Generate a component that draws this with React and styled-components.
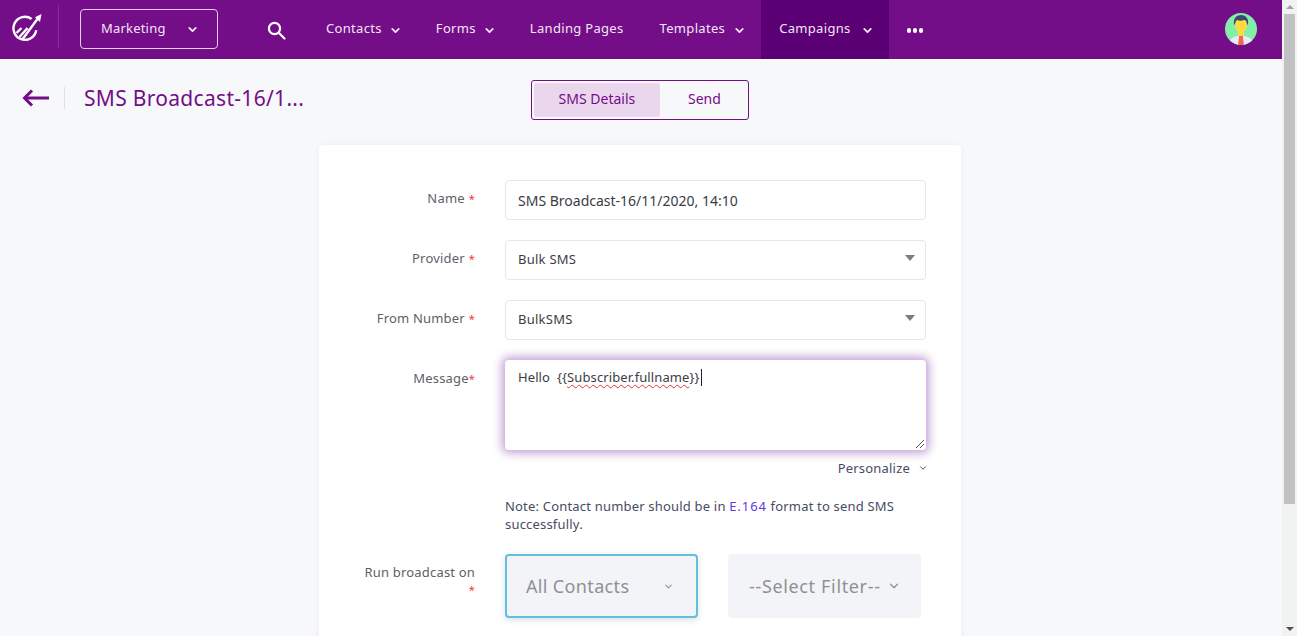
import React from "react";
import styled, { createGlobalStyle } from "styled-components";
import { ChevronDown } from "lucide-react";

const Global = createGlobalStyle`
  html, body { margin: 0; padding: 0; height: 636px; overflow: hidden; }
  body { font-family: "Noto Sans", "Open Sans", sans-serif; background: #f7f8fa; }
  * { box-sizing: border-box; }
`;

const Shell = styled.div`
  display: flex;
  width: 1297px;
  height: 636px;
  overflow: hidden;
`;
const Page = styled.div`
  flex: 1;
  min-width: 0;
  display: flex;
  flex-direction: column;
  background: #f7f8fa;
`;
const Scrollbar = styled.div`
  width: 15px;
  flex: none;
  background: #f1f2f2;
  display: flex;
  flex-direction: column;
  align-items: center;
`;
const ScrollArrow = styled.div`
  height: 14px;
  flex: none;
  display: flex;
  align-items: center;
  justify-content: center;
  &::before {
    content: "";
    border-left: 4px solid transparent;
    border-right: 4px solid transparent;
    ${(p) =>
      p.$down
        ? "border-top: 4px solid #505050;"
        : "border-bottom: 4px solid #a3a3a3;"}
  }
`;
const ScrollThumb = styled.div`
  width: 11px;
  height: 490px;
  flex: none;
  background: #c1c1c1;
`;
const ScrollRest = styled.div`
  flex: 1;
`;

const TopBar = styled.header`
  height: 59px;
  flex: none;
  background: #740d88;
  display: flex;
  align-items: stretch;
  color: #f3e6f5;
  font-size: 13px;
`;
const Logo = styled.div`
  width: 59px;
  flex: none;
  display: flex;
  align-items: center;
  padding: 3px 0 0 11px;
  border-right: 1px solid rgba(255, 255, 255, 0.14);
  margin: 5px 0 11px;
`;
const WorkspaceBox = styled.div`
  margin: 9px 0 10px 21px;
  width: 138px;
  height: 40px;
  border: 1px solid #e6cfea;
  border-radius: 4px;
  display: flex;
  align-items: center;
  padding: 0 18px 3px 20px;
  justify-content: space-between;
  letter-spacing: 0.2px;
`;
const SearchSlot = styled.div`
  width: 108px;
  flex: none;
  display: flex;
  align-items: center;
  padding: 2px 0 0 49px;
`;
const NavItem = styled.div`
  display: flex;
  align-items: center;
  gap: ${(p) => p.$gap ?? 7.5}px;
  padding: 0 ${(p) => p.$pr ?? 15.5}px 3px ${(p) => p.$pl ?? 18}px;
  background: ${(p) => (p.$active ? "#5a0074" : "transparent")};
  letter-spacing: 0.32px;
  white-space: nowrap;
`;
const NavChevron = styled.span`
  display: flex;
  margin-top: 4px;
`;
const Dots = styled.div`
  display: flex;
  gap: 1.5px;
  padding: 2px 0 0 18px;
  align-items: center;
  span {
    width: 4.5px;
    height: 4.5px;
    border-radius: 50%;
    background: #fff;
  }
`;
const Spacer = styled.div`
  flex: 1;
`;
const AvatarSlot = styled.div`
  display: flex;
  align-items: center;
  padding: 0 25px 2px 0;
`;

const SubBar = styled.div`
  height: 86px;
  flex: none;
  display: flex;
  align-items: flex-start;
`;
const Back = styled.div`
  width: 65px;
  flex: none;
  margin-top: 28px;
  height: 22px;
  padding-left: 22px;
  border-right: 1px solid #e0e0e4;
  display: flex;
  align-items: center;
  color: #740d88;
`;
const PageTitle = styled.h1`
  margin: 25px 0 0 19px;
  width: 447px;
  flex: none;
  font-size: 21px;
  letter-spacing: 0.3px;
  line-height: 28px;
  font-weight: 400;
  color: #740d88;
  white-space: nowrap;
`;
const Tabs = styled.div`
  margin: 21px 0 0 0;
  width: 218px;
  height: 40px;
  border: 1px solid #740d88;
  border-radius: 3px;
  padding: 2px;
  display: flex;
  font-size: 14px;
  color: #740d88;
`;
const Tab = styled.div`
  width: ${(p) => p.$w}px;
  display: flex;
  align-items: center;
  justify-content: center;
  padding: 0 0 3px ${(p) => p.$pl ?? 0}px;
  border-radius: 2px;
  background: ${(p) => (p.$active ? "#ead7ee" : "transparent")};
`;

const Main = styled.main`
  flex: 1;
  display: flex;
  padding-left: 319px;
  min-height: 0;
`;
const Card = styled.section`
  width: 642px;
  height: 600px;
  flex: none;
  background: #fff;
  border-radius: 4px;
  box-shadow: 0 0 6px rgba(30, 30, 60, 0.05);
  padding: 35px 36px 0 0;
`;
const Row = styled.div`
  display: grid;
  grid-template-columns: 156px 421px;
  column-gap: 30px;
  margin-bottom: ${(p) => p.$mb ?? 20}px;
`;
const Label = styled.label`
  text-align: right;
  font-size: 13px;
  line-height: 18px;
  letter-spacing: 0.18px;
  color: #5f6068;
  padding-top: 9px;
`;
const Star = styled.span`
  display: ${(p) => (p.$block ? "block" : "inline")};
  color: #f5333f;
  font-size: 11px;
  margin-left: ${(p) => p.$ml ?? 4}px;
`;
const Field = styled.div`
  height: 40px;
  border: 1px solid #e6e7ec;
  border-radius: 4px;
  background: #fff;
  display: flex;
  align-items: center;
  justify-content: space-between;
  padding: 0 13px ${(p) => p.$pb ?? 2}px 12px;
  font-size: ${(p) => p.$fs ?? 13}px;
  letter-spacing: ${(p) => p.$ls ?? 0.25}px;
  color: #3b3d45;
`;
const Caret = styled.span`
  width: 0;
  height: 0;
  margin: 0 -3px 3px 0;
  border-left: 5.5px solid transparent;
  border-right: 5.5px solid transparent;
  border-top: 6px solid #7d7d7d;
`;
const TextArea = styled.div`
  position: relative;
  height: 90px;
  border-radius: 4px;
  background: #fff;
  box-shadow: 0 0 10px 3px rgba(130, 50, 170, 0.48);
  padding: 8px 13px;
  font-size: 13px;
  letter-spacing: 0.1px;
  line-height: 19px;
  color: #3b3d45;
  display: flex;
  white-space: pre;
`;
const Misspelled = styled.span`
  text-decoration: underline wavy #e8333f 1px;
  text-decoration-skip-ink: none;
  text-underline-offset: 2px;
`;
const Cursor = styled.span`
  width: 1px;
  height: 17px;
  margin: 1px 0 0 1px;
  background: #222;
`;
const Grip = styled.svg`
  position: absolute;
  right: 1px;
  bottom: 1px;
`;
const PersonalizeRow = styled.div`
  display: flex;
  justify-content: flex-end;
  align-items: center;
  gap: 8px;
  margin: 9px -2px 0 0;
  font-size: 13px;
  line-height: 18px;
  letter-spacing: 0.2px;
  color: #464c66;
`;
const Note = styled.p`
  margin: 20px 0 0;
  font-size: 13px;
  line-height: 18px;
  letter-spacing: 0.19px;
  color: #464c66;
  a {
    color: #6236e0;
    letter-spacing: 0.95px;
  }
`;
const BroadcastRow = styled(Row)`
  margin-top: 21px;
`;
const Pickers = styled.div`
  display: flex;
  gap: 30px;
`;
const Picker = styled.div`
  width: ${(p) => p.$w}px;
  height: 64px;
  flex: none;
  border-radius: 4px;
  background: #f3f4f8;
  border: 2px solid ${(p) => (p.$focus ? "#62bfe0" : "transparent")};
  box-shadow: ${(p) => (p.$focus ? "0 2px 6px rgba(60,80,110,.18)" : "none")};
  display: flex;
  align-items: center;
  justify-content: space-between;
  padding: 0 ${(p) => p.$pr}px 0 ${(p) => p.$pl}px;
  font-size: 18px;
  letter-spacing: ${(p) => p.$ls}px;
  color: #8f9095;
  white-space: nowrap;
`;

const Chevron = ({ size = 13, w = 3.4, color = "currentColor" }) => (
  <ChevronDown size={size} strokeWidth={w} color={color} />
);

const SearchGlyph = () => (
  <svg width="19" height="19" viewBox="0 0 19 19" fill="none" stroke="#fff" strokeWidth="2.2" strokeLinecap="round">
    <circle cx="7.5" cy="7.5" r="5.6" />
    <path d="M12 12l5.5 5.5" />
  </svg>
);

const BackArrow = () => (
  <svg width="27" height="18" viewBox="0 0 27 18" fill="none" stroke="currentColor" strokeWidth="3">
    <path d="M2.5 9H27" />
    <path d="M10 1.5L2.5 9l7.5 7.5" />
  </svg>
);

const LogoMark = () => (
  <svg width="32" height="30" viewBox="0 0 32 30" fill="none" stroke="#fff" strokeWidth="2.4">
    <path d="M20.6 5.9A11.5 11.5 0 1 0 25.3 17.3" />
    <path d="M5.5 20l5-5M8.5 24l8-9M11 27L27.5 4.5" />
    <path d="M30.5 1L24 4.2L29 9Z" fill="#fff" stroke="none" />
  </svg>
);

const Avatar = () => (
  <svg width="32" height="32" viewBox="0 0 32 32">
    <defs>
      <clipPath id="av"><circle cx="16" cy="16" r="16" /></clipPath>
    </defs>
    <g clipPath="url(#av)">
      <rect width="32" height="32" fill="#83eeaa" />
      <path d="M3 32c1-6 5-8 9-9h8c4 1 8 3 9 9z" fill="#e9ebf3" />
      <path d="M14 22h4v3l1 7h-6l1-7z" fill="#f9604f" />
      <rect x="13" y="17" width="6" height="6" fill="#fcd93e" />
      <ellipse cx="16" cy="12" rx="6" ry="7" fill="#fcdb3f" />
      <path d="M9 11c-1-6 3-9 7-9s8 3 7 9l-1 1c0-3-1-5-3-5-2 1-5 1-7 0-1 1-2 2-2 5z" fill="#3b4a6b" />
    </g>
  </svg>
);

const NavArrow = () => (
  <NavChevron><Chevron /></NavChevron>
);

export default function App() {
  return (
    <Shell>
      <Global />
      <Page>
        <TopBar>
          <Logo><LogoMark /></Logo>
          <WorkspaceBox>Marketing <NavArrow /></WorkspaceBox>
          <SearchSlot><SearchGlyph /></SearchSlot>
          <NavItem $pl={0}>Contacts <NavArrow /></NavItem>
          <NavItem>Forms <NavArrow /></NavItem>
          <NavItem $pr={18}>Landing Pages</NavItem>
          <NavItem>Templates <NavArrow /></NavItem>
          <NavItem $active $gap={10.5} $pr={14.5}>Campaigns <NavArrow /></NavItem>
          <Dots><span /><span /><span /></Dots>
          <Spacer />
          <AvatarSlot><Avatar /></AvatarSlot>
        </TopBar>
        <SubBar>
          <Back><BackArrow /></Back>
          <PageTitle>SMS Broadcast-16/1...</PageTitle>
          <Tabs>
            <Tab $active $w={127}>SMS Details</Tab>
            <Tab $w={87} $pl={3}>Send</Tab>
          </Tabs>
        </SubBar>
        <Main>
          <Card>
            <Row>
              <Label>Name<Star>*</Star></Label>
              <Field $fs={14} $ls={0} $pb={0}>SMS Broadcast-16/11/2020, 14:10</Field>
            </Row>
            <Row>
              <Label>Provider<Star>*</Star></Label>
              <Field>Bulk SMS<Caret /></Field>
            </Row>
            <Row>
              <Label>From Number<Star>*</Star></Label>
              <Field>BulkSMS<Caret /></Field>
            </Row>
            <Row $mb={0}>
              <Label>Message<Star $ml={0}>*</Star></Label>
              <div>
                <TextArea>
                  Hello  {"{{"}<Misspelled>Subscriber.fullname</Misspelled>{"}}"}<Cursor />
                  <Grip width="11" height="11" viewBox="0 0 11 11" stroke="#555" strokeWidth="1">
                    <path d="M2 10L10 2M6 10L10 6" />
                  </Grip>
                </TextArea>
                <PersonalizeRow>Personalize <Chevron size={10} w={2.4} /></PersonalizeRow>
                <Note>Note: Contact number should be in <a>E.164</a> format to send SMS successfully.</Note>
              </div>
            </Row>
            <BroadcastRow>
              <Label>Run broadcast on <Star $block $ml={0}>*</Star></Label>
              <Pickers>
                <Picker $focus $w={193} $pl={19} $pr={22} $ls={0.35}>All Contacts <Chevron size={11} w={2.2} /></Picker>
                <Picker $w={193} $pl={19} $pr={18} $ls={0.65}>--Select Filter-- <Chevron size={14} w={2.2} /></Picker>
              </Pickers>
            </BroadcastRow>
          </Card>
        </Main>
      </Page>
      <Scrollbar>
        <ScrollArrow />
        <ScrollThumb />
        <ScrollRest />
        <ScrollArrow $down />
      </Scrollbar>
    </Shell>
  );
}
